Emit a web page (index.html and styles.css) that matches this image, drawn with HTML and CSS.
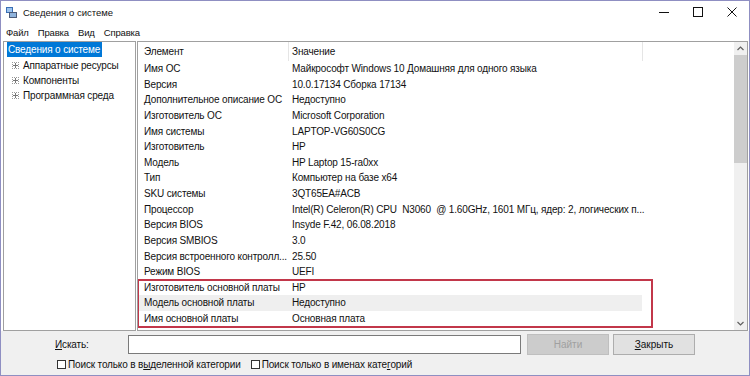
FILE: index.html
```html
<!DOCTYPE html>
<html>
<head>
  <title>Сведения о системе</title>
  <link rel="stylesheet" href="styles.css">
</head>
<body>
  <div class="window">
    <div class="titlebar">
      <svg class="app-icon" width="11" height="11" viewBox="0 0 11 11">
        <rect x="0" y="0" width="7" height="6" fill="#3a6fb5"/>
        <rect x="1" y="1" width="5" height="4" fill="#9cc3ee"/>
        <rect x="3" y="5" width="8" height="6" fill="#4b5a78"/>
        <rect x="4" y="6" width="6" height="4" fill="#8fb3dc"/>
      </svg>
      <span class="title">Сведения о системе</span>
      <div class="controls">
        <span class="ctl">
          <svg width="10" height="10" viewBox="0 0 10 10"><path d="M0 5.5h10" stroke="#111" stroke-width="1"/></svg>
        </span>
        <span class="ctl">
          <svg width="10" height="10" viewBox="0 0 10 10"><rect x="0.5" y="0.5" width="9" height="9" fill="none" stroke="#111" stroke-width="1"/></svg>
        </span>
        <span class="ctl">
          <svg width="10" height="10" viewBox="0 0 10 10"><path d="M0.5 0.5l9 9M9.5 0.5l-9 9" stroke="#111" stroke-width="1"/></svg>
        </span>
      </div>
    </div>

    <div class="menubar">
      <span class="menu-item">Файл</span>
      <span class="menu-item">Правка</span>
      <span class="menu-item">Вид</span>
      <span class="menu-item">Справка</span>
    </div>

    <div class="main">
      <div class="tree">
        <div class="tree-item selected">Сведения о системе</div>
        <div class="tree-item child"><span class="expander"></span>Аппаратные ресурсы</div>
        <div class="tree-item child"><span class="expander"></span>Компоненты</div>
        <div class="tree-item child"><span class="expander"></span>Программная среда</div>
      </div>

      <div class="list">
        <div class="list-body">
          <div class="list-header">
            <span class="col-name">Элемент</span>
            <span class="col-value">Значение</span>
          </div>
          <div class="row"><span class="col-name">Имя ОС</span><span class="col-value">Майкрософт Windows 10 Домашняя для одного языка</span></div>
          <div class="row"><span class="col-name">Версия</span><span class="col-value">10.0.17134 Сборка 17134</span></div>
          <div class="row"><span class="col-name">Дополнительное описание ОС</span><span class="col-value">Недоступно</span></div>
          <div class="row"><span class="col-name">Изготовитель ОС</span><span class="col-value">Microsoft Corporation</span></div>
          <div class="row"><span class="col-name">Имя системы</span><span class="col-value">LAPTOP-VG60S0CG</span></div>
          <div class="row"><span class="col-name">Изготовитель</span><span class="col-value">HP</span></div>
          <div class="row"><span class="col-name">Модель</span><span class="col-value">HP Laptop 15-ra0xx</span></div>
          <div class="row"><span class="col-name">Тип</span><span class="col-value">Компьютер на базе x64</span></div>
          <div class="row"><span class="col-name">SKU системы</span><span class="col-value">3QT65EA#ACB</span></div>
          <div class="row"><span class="col-name">Процессор</span><span class="col-value">Intel(R) Celeron(R) CPU&nbsp; N3060&nbsp; @ 1.60GHz, 1601 МГц, ядер: 2, логических п...</span></div>
          <div class="row"><span class="col-name">Версия BIOS</span><span class="col-value">Insyde F.42, 06.08.2018</span></div>
          <div class="row"><span class="col-name">Версия SMBIOS</span><span class="col-value">3.0</span></div>
          <div class="row"><span class="col-name">Версия встроенного контролл...</span><span class="col-value">25.50</span></div>
          <div class="row"><span class="col-name">Режим BIOS</span><span class="col-value">UEFI</span></div>
          <div class="marked">
            <div class="row"><span class="col-name">Изготовитель основной платы</span><span class="col-value">HP</span></div>
            <div class="row hover"><span class="col-name">Модель основной платы</span><span class="col-value">Недоступно</span></div>
            <div class="row"><span class="col-name">Имя основной платы</span><span class="col-value">Основная плата</span></div>
          </div>
        </div>
        <div class="scrollbar">
          <svg class="arrow" width="7" height="5" viewBox="0 0 7 5"><path d="M0.5 4L3.5 1L6.5 4" fill="none" stroke="#606060" stroke-width="1.2"/></svg>
          <div class="track">
            <div class="thumb"></div>
          </div>
          <svg class="arrow" width="7" height="5" viewBox="0 0 7 5"><path d="M0.5 1L3.5 4L6.5 1" fill="none" stroke="#606060" stroke-width="1.2"/></svg>
        </div>
      </div>
    </div>

    <div class="search">
      <div class="search-row">
        <label class="search-label"><u>И</u>скать:</label>
        <input type="text" class="search-input">
        <button type="button" class="btn" disabled>Найти</button>
        <button type="button" class="btn"><u>З</u>акрыть</button>
      </div>
      <div class="check-row">
        <label class="check"><span class="box"></span>Поиск только в в<u>ы</u>деленной категории</label>
        <label class="check"><span class="box"></span>Поиск только в именах кате<u>г</u>орий</label>
      </div>
    </div>
  </div>
</body>
</html>
```

FILE: styles.css
```css
/* Окно "Сведения о системе" */
body {
  margin: 0;
  font-family: "Liberation Sans", Arial, sans-serif;
  font-size: 10px;
  letter-spacing: -0.15px;
  color: #111;
  background-color: #FFFFFF;
}

.window {
  width: 750px;
  height: 376px;
  box-sizing: border-box;
  border: 1px solid #8f8fc2;
  background-color: #F0F0F0;
  display: flex;
  flex-direction: column;
}

.titlebar {
  height: 22px;
  background-color: #FFFFFF;
  display: flex;
  align-items: center;
}

.app-icon {
  margin-left: 5px;
  margin-right: 6px;
}

.title {
  font-size: 9.5px;
  letter-spacing: 0;
}

.controls {
  margin-left: auto;
  display: flex;
}

.ctl {
  width: 34px;
  height: 21px;
  display: flex;
  align-items: center;
  justify-content: center;
}

.menubar {
  height: 18px;
  background-color: #FFFFFF;
  display: flex;
  align-items: center;
  padding-left: 5px;
  gap: 9px;
  font-size: 9.5px;
}

.main {
  height: 290px;
  display: flex;
  padding: 0 1px 0 2px;
  gap: 1px;
  background-color: #FFFFFF;
}

.tree {
  width: 131px;
  border: 1px solid #A0A0A0;
  background-color: #FFFFFF;
}

.tree-item {
  height: 15.3px;
  line-height: 15px;
  white-space: nowrap;
  display: flex;
  align-items: center;
}

.tree-item.selected {
  display: inline-flex;
  margin-left: 3px;
  padding: 0 2px 0 1px;
  background-color: #0078D7;
  color: #FFFFFF;
  height: 15px;
  margin-bottom: 0.5px;
}

.tree-item.child {
  padding-left: 8px;
}

.expander {
  width: 5px;
  height: 5px;
  border: 1px dotted #9a9a9a;
  margin-right: 4px;
  background:
    linear-gradient(#777, #777) center / 5px 1px no-repeat,
    linear-gradient(#777, #777) center / 1px 5px no-repeat;
}

.list {
  flex: 1;
  border: 1px solid #A0A0A0;
  display: flex;
  background-color: #FFFFFF;
  overflow: hidden;
}

.list-body {
  flex: 1;
  overflow: hidden;
}

.list-header {
  height: 19px;
  display: flex;
  align-items: center;
}

.list-header .col-name {
  width: 144px;
}

.list-header .col-value {
  border-left: 1px solid #E5E5E5;
  border-right: 1px solid #E5E5E5;
  padding-left: 3px;
  height: 19px;
  line-height: 19px;
  width: 350px;
}

.row {
  height: 15.625px;
  line-height: 15.625px;
  display: flex;
  white-space: nowrap;
}

.col-name {
  width: 148px;
  padding-left: 6px;
  flex-shrink: 0;
  overflow: hidden;
  text-overflow: ellipsis;
}

.marked {
  width: 514px;
  outline: 2px solid #C2374A;
  outline-offset: -1px;
}

.row.hover {
  background-color: #EFEFEF;
  margin: 0 10px 0 1px;
}

.row.hover .col-name {
  padding-left: 5px;
}

.scrollbar {
  width: 13px;
  background-color: #F0F0F0;
  display: flex;
  flex-direction: column;
  align-items: center;
}

.arrow {
  margin: 4px 0;
}

.track {
  flex: 1;
  width: 100%;
}

.thumb {
  height: 108px;
  background-color: #CDCDCD;
}

.search {
  flex: 1;
  padding-left: 54px;
}

.search-row {
  display: flex;
  align-items: center;
  margin-top: 3px;
  height: 21px;
}

.search-label {
  width: 73px;
}

.search-input {
  width: 393px;
  height: 19px;
  box-sizing: border-box;
  border: 1px solid #7A7A7A;
  margin: 0 6px 0 0;
  padding: 0;
}

.btn {
  width: 82px;
  height: 21px;
  box-sizing: border-box;
  border: 1px solid #ADADAD;
  background-color: #E1E1E1;
  font-family: inherit;
  font-size: 10px;
  color: #111;
  margin-right: 4px;
  padding: 0;
}

.btn:disabled {
  background-color: #CCCCCC;
  border-color: #BFBFBF;
  color: #A0A0A0;
}

.check-row {
  display: flex;
  margin-top: 1px;
  height: 17px;
  align-items: center;
}

.check {
  display: flex;
  align-items: center;
  margin-right: 8px;
  margin-left: 2px;
}

.box {
  width: 7px;
  height: 7px;
  border: 1px solid #333;
  background-color: #FFFFFF;
  margin-right: 2px;
}
```
